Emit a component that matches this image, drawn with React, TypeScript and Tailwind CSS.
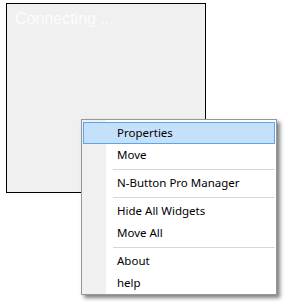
import React from 'react';

type Entry = { label: string; active?: boolean } | 'sep';

const MENU: Entry[] = [
  { label: 'Properties', active: true },
  { label: 'Move' },
  'sep',
  { label: 'N-Button Pro Manager' },
  'sep',
  { label: 'Hide All Widgets' },
  { label: 'Move All' },
  'sep',
  { label: 'About' },
  { label: 'help' },
];

function ContextMenu() {
  return (
    <div className="absolute left-[81px] top-[119px] w-[196px] border border-[#979797] bg-[linear-gradient(to_right,#f0f0f0_24px,#ffffff_24px)] pt-[2px] shadow-[3px_3px_4px_rgba(0,0,0,0.5)]">
      {MENU.map((item, i) =>
        item === 'sep' ? (
          <div key={i} className="flex h-[6px] items-center pl-[31px] pr-[1px]">
            <div className="h-px w-full bg-[#d7d7d7]" />
          </div>
        ) : (
          <div
            key={i}
            className={
              item.active
                ? 'mx-[1px] flex h-[22px] items-center border border-[#5ba5ee] bg-[#c4e0fb] pl-[33px] text-[11.5px] text-black'
                : 'mx-[1px] flex h-[22px] items-center border border-transparent pl-[33px] text-[11.5px] text-black'
            }
          >
            {item.label}
          </div>
        ),
      )}
    </div>
  );
}

export default function App() {
  return (
    <div
      className="relative h-[302px] w-[288px] bg-white pl-[6px] pt-[3px]"
      style={{ fontFamily: '"Noto Sans", "Open Sans", sans-serif' }}
    >
      <div className="h-[190px] w-[200px] border border-black bg-[#f0f0f0] px-[8px] pt-[6px]">
        <p className="font-['Liberation_Sans',Arial,sans-serif] text-[16px] leading-[18px] text-[#fcfcfc]">
          Connecting ...
        </p>
      </div>
      <ContextMenu />
    </div>
  );
}
